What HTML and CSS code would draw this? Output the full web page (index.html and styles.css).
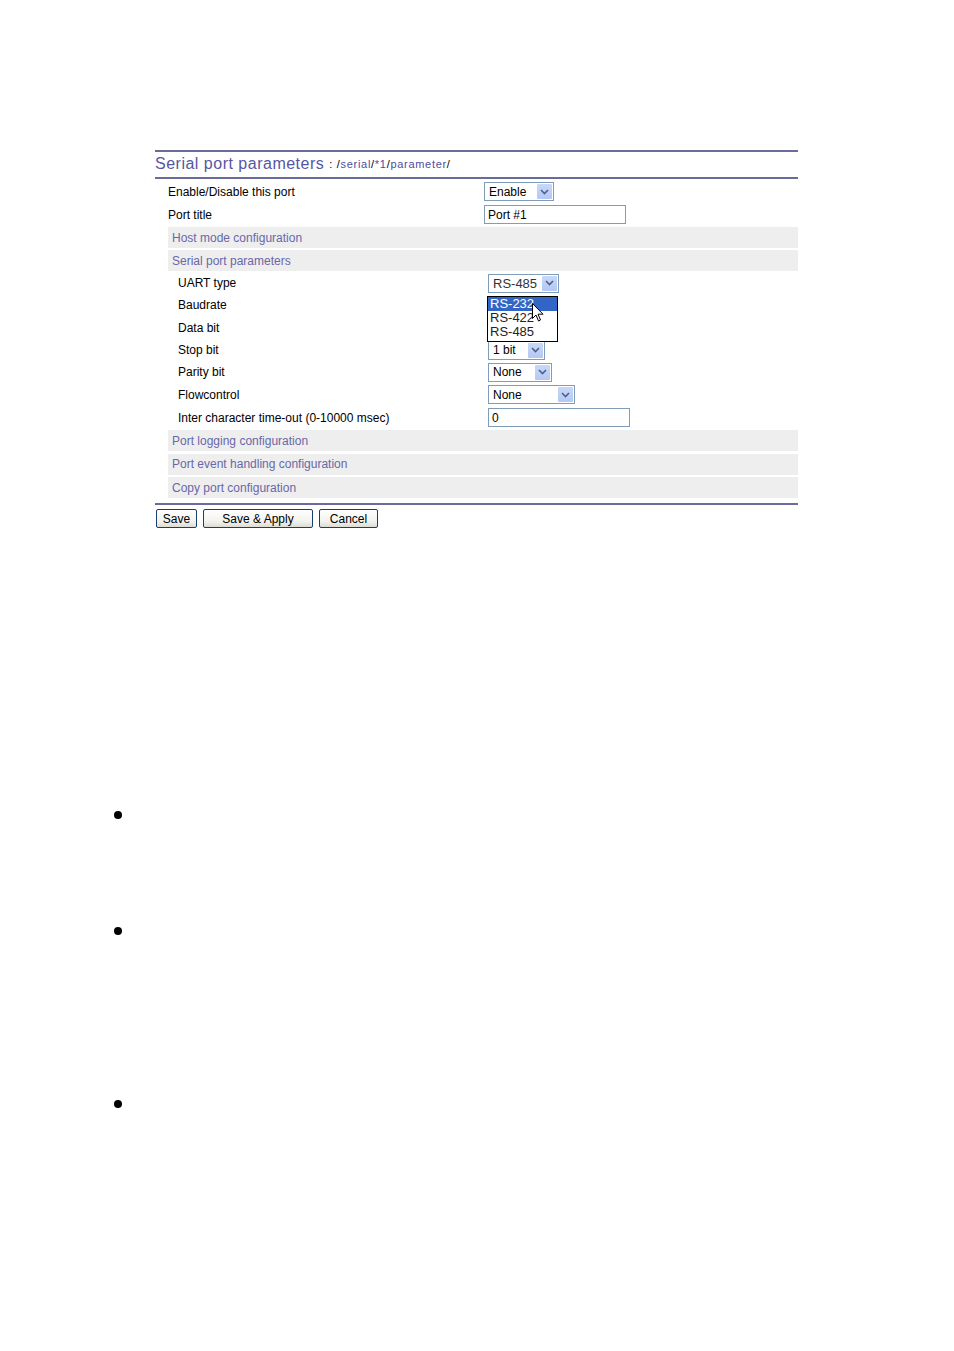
FILE: index.html
```html
<!DOCTYPE html>
<html>
<head>
<meta charset="utf-8">
<link rel="stylesheet" href="styles.css">
</head>
<body>
<div class="panel">
  <div class="rule"></div>
  <div class="title"><span class="title-main">Serial port parameters</span> <span class="path">: <span class="sl">/</span><span class="pl">serial</span><span class="sl">/</span><span class="pl">*1</span><span class="sl">/</span><span class="pl">parameter</span><span class="sl">/</span></span></div>
  <div class="rule"></div>
  <div class="rows">
    <div class="row">
      <div class="label">Enable/Disable this port</div>
      <div class="value"><div class="sel w70"><span class="sel-text">Enable</span><span class="arrow"><svg width="9" height="6" viewBox="0 0 9 6"><path d="M1 1 L4.5 4.5 L8 1" fill="none" stroke="#4d6185" stroke-width="1.6"/></svg></span></div></div>
    </div>
    <div class="row">
      <div class="label">Port title</div>
      <div class="value"><div class="inp w142">Port #1</div></div>
    </div>
    <div class="row"><div class="group">Host mode configuration</div></div>
    <div class="row"><div class="group">Serial port parameters</div></div>
    <div class="row sub">
      <div class="label">UART type</div>
      <div class="value">
        <div class="sel w71 big"><span class="sel-text dim">RS-485</span><span class="arrow"><svg width="9" height="6" viewBox="0 0 9 6"><path d="M1 1 L4.5 4.5 L8 1" fill="none" stroke="#4d6185" stroke-width="1.6"/></svg></span></div>
        <div class="droplist">
          <div class="opt on">RS-232</div>
          <div class="opt">RS-422</div>
          <div class="opt">RS-485</div>
          <svg class="cursor" width="12" height="19" viewBox="0 0 12 19"><path d="M0.5 0.5 L0.5 15.5 L4 12 L6.5 18 L8.5 17 L6 11.2 L11 11.2 Z" fill="#ffffff" stroke="#000000" stroke-width="1"/></svg>
        </div>
      </div>
    </div>
    <div class="row sub"><div class="label">Baudrate</div><div class="value"></div></div>
    <div class="row sub tall"><div class="label">Data bit</div><div class="value"></div></div>
    <div class="row sub">
      <div class="label">Stop bit</div>
      <div class="value"><div class="sel w57"><span class="sel-text">1 bit</span><span class="arrow"><svg width="9" height="6" viewBox="0 0 9 6"><path d="M1 1 L4.5 4.5 L8 1" fill="none" stroke="#4d6185" stroke-width="1.6"/></svg></span></div></div>
    </div>
    <div class="row sub">
      <div class="label">Parity bit</div>
      <div class="value"><div class="sel w64"><span class="sel-text">None</span><span class="arrow"><svg width="9" height="6" viewBox="0 0 9 6"><path d="M1 1 L4.5 4.5 L8 1" fill="none" stroke="#4d6185" stroke-width="1.6"/></svg></span></div></div>
    </div>
    <div class="row sub tall">
      <div class="label">Flowcontrol</div>
      <div class="value"><div class="sel w87"><span class="sel-text">None</span><span class="arrow"><svg width="9" height="6" viewBox="0 0 9 6"><path d="M1 1 L4.5 4.5 L8 1" fill="none" stroke="#4d6185" stroke-width="1.6"/></svg></span></div></div>
    </div>
    <div class="row sub tall">
      <div class="label">Inter character time-out (0-10000 msec)</div>
      <div class="value"><div class="inp w142">0</div></div>
    </div>
    <div class="row"><div class="group">Port logging configuration</div></div>
    <div class="row tall24"><div class="group">Port event handling configuration</div></div>
    <div class="row"><div class="group">Copy port configuration</div></div>
  </div>
  <div class="rule bottom"></div>
  <div class="buttons">
    <div class="btn b-save">Save</div>
    <div class="btn b-apply">Save &amp; Apply</div>
    <div class="btn b-cancel">Cancel</div>
  </div>
</div>
<ul class="bullets">
  <li class="li1">&nbsp;</li>
  <li class="li2">&nbsp;</li>
  <li class="li3">&nbsp;</li>
</ul>
</body>
</html>
```
FILE: styles.css
```css
html, body {
  margin: 0;
  padding: 0;
  background: #ffffff;
}
body {
  font-family: "Liberation Sans", Arial, sans-serif;
  font-size: 12px;
  color: #000000;
}
.panel {
  margin-left: 155px;
  padding-top: 150px;
  width: 643px;
}
.rule {
  height: 2px;
  background: #6b6b9b;
}
.rule.bottom {
  margin-top: 4px;
}
.title {
  height: 25px;
  display: flex;
  align-items: center;
  white-space: nowrap;
  padding-bottom: 1px;
  box-sizing: border-box;
}
.title-main {
  font-size: 16px;
  color: #5656a2;
  letter-spacing: 0.5px;
}
.path {
  font-size: 11px;
  color: #000000;
  margin-left: 5px;
  letter-spacing: 0.7px;
}
.path .pl {
  color: #4d4da0;
}
.rows {
  display: flex;
  flex-direction: column;
  padding-top: 1px;
}
.row {
  height: 23px;
  display: flex;
  align-items: center;
  position: relative;
}
.row.tall24 {
  height: 24px;
}
.row.sub {
  height: 22px;
}
.row.sub.tall {
  height: 23px;
}
.label {
  width: 316px;
  padding-left: 13px;
  flex: none;
  white-space: nowrap;
}
.row.sub .label {
  padding-left: 23px;
  width: 310px;
}
.value {
  display: flex;
  align-items: center;
  position: relative;
}
.group {
  margin-left: 13px;
  height: 21px;
  flex: 1;
  background: #eeeeee;
  color: #6868a8;
  padding-left: 4px;
  display: flex;
  align-items: center;
}
.sel {
  height: 17px;
  border: 1px solid #7f9db9;
  background: #ffffff;
  display: flex;
  align-items: center;
  justify-content: space-between;
  box-sizing: content-box;
}
.sel-text {
  padding-left: 4px;
  font-size: 12px;
}
.sel.big .sel-text {
  font-size: 13px;
}
.sel-text.dim {
  color: #333333;
}
.arrow {
  width: 15px;
  height: 15px;
  margin-right: 1px;
  background: linear-gradient(#c8d8fb, #b4c8f4);
  border-radius: 1px;
  display: flex;
  align-items: center;
  justify-content: center;
}
.w70 { width: 68px; }
.w71 { width: 69px; }
.w57 { width: 55px; }
.w64 { width: 62px; }
.w87 { width: 85px; }
.w142 { width: 136px; }
.inp {
  height: 17px;
  border: 1px solid #7f9db9;
  background: #ffffff;
  padding-left: 3px;
  padding-right: 1px;
  display: flex;
  align-items: center;
  font-size: 12px;
}
.droplist {
  position: absolute;
  left: -1px;
  top: 22px;
  width: 69px;
  border: 1px solid #000000;
  background: #ffffff;
  z-index: 5;
  padding-bottom: 2px;
}
.opt {
  height: 14px;
  line-height: 14px;
  font-size: 13px;
  padding-left: 2px;
  color: #222222;
}
.opt.on {
  background: #3166c6;
  color: #ffffff;
}
.cursor {
  position: absolute;
  left: 44px;
  top: 6px;
}
.buttons {
  display: flex;
  gap: 6px;
  margin-top: 4px;
  margin-left: 1px;
}
.btn {
  height: 17px;
  border: 1px solid #1c3d70;
  border-radius: 2px;
  background: linear-gradient(#ffffff, #f1f1ec 70%, #dcdcd4);
  display: flex;
  align-items: center;
  justify-content: center;
  font-size: 12px;
}
.b-save { width: 39px; }
.b-apply { width: 108px; }
.b-cancel { width: 57px; }
.bullets {
  margin: 276px 0 0 0;
  padding-left: 137px;
  font-size: 26px;
  line-height: 20px;
}
.bullets li {
  list-style: disc;
}
.li1 { height: 116px; }
.li2 { height: 173px; }
.li3 { height: 20px; }
```
